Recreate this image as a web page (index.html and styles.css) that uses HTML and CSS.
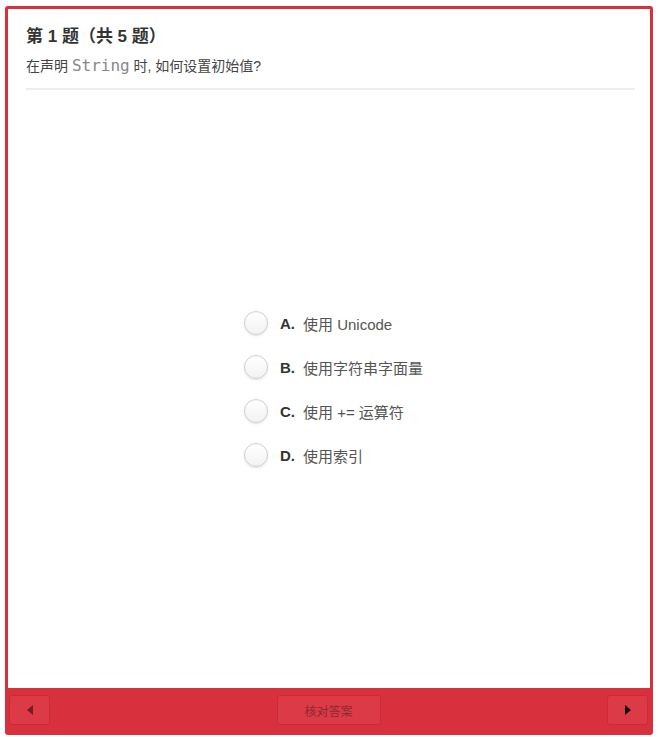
FILE: index.html
```html
<!DOCTYPE html>
<html lang="zh">
<head>
<meta charset="utf-8">
<link rel="stylesheet" href="styles.css">
</head>
<body>
<div class="quiz">
  <div class="main">
    <div class="head">
      <div class="title">第 1 题（共 5 题）</div>
      <div class="question">在声明 <code>String</code> 时, 如何设置初始值?</div>
    </div>
    <div class="options">
      <div class="list">
        <label class="opt"><span class="radio"></span><b>A.</b><span class="txt">使用 Unicode</span></label>
        <label class="opt"><span class="radio"></span><b>B.</b><span class="txt">使用字符串字面量</span></label>
        <label class="opt"><span class="radio"></span><b>C.</b><span class="txt">使用 += 运算符</span></label>
        <label class="opt"><span class="radio"></span><b>D.</b><span class="txt">使用索引</span></label>
      </div>
    </div>
  </div>
  <div class="foot">
    <button class="btn nav"><svg width="12" height="12" viewBox="0 0 12 12"><path d="M9 1 L3 6 L9 11 Z" fill="#7a1a22"/></svg></button>
    <button class="btn check">核对答案</button>
    <button class="btn nav"><svg width="12" height="12" viewBox="0 0 12 12"><path d="M3 1 L9 6 L3 11 Z" fill="#111"/></svg></button>
  </div>
</div>
</body>
</html>
```
FILE: styles.css
```css
* { box-sizing: border-box; }
html, body { margin: 0; padding: 0; background: #fff; }
body {
  font-family: "Liberation Sans", "Noto Sans CJK SC", sans-serif;
  color: #333;
  padding: 6px 5px 2px 5px;
}
.quiz {
  height: 729px;
  border: 3px solid #d9303d;
  border-radius: 3px;
  display: flex;
  flex-direction: column;
  background: #fff;
}
.main {
  flex: 1;
  display: flex;
  flex-direction: column;
  padding: 16px 15px 0 18px;
}
.head {
  border-bottom: 2px solid #eeeeee;
  padding-bottom: 11px;
}
.title {
  font-size: 17px;
  font-weight: bold;
  color: #333;
  line-height: 24px;
}
.question {
  font-size: 14px;
  color: #444;
  line-height: 22px;
  margin-top: 6px;
}
.question code {
  font-family: "DejaVu Sans Mono", monospace;
  font-size: 16px;
  color: #888;
}
.options {
  flex: 1;
  display: flex;
  justify-content: center;
  align-items: center;
  padding-left: 6px;
}
.list {
  display: flex;
  flex-direction: column;
  gap: 20px;
}
.opt {
  display: flex;
  align-items: center;
  height: 24px;
  font-size: 15px;
  color: #555;
  white-space: nowrap;
}
.radio {
  width: 24px;
  height: 24px;
  border-radius: 50%;
  border: 1px solid #cfcfcf;
  background: linear-gradient(#ffffff, #f2f2f2);
  box-shadow: 0 1px 2px rgba(0,0,0,0.12);
  margin-right: 12px;
}
.opt b {
  font-size: 15px;
  color: #333;
  margin-right: 8px;
}
.txt { font-size: 15px; }
.foot {
  height: 44px;
  background: #d9303d;
  display: flex;
  align-items: center;
  justify-content: space-between;
  padding: 0 2px 0 1px;
}
.btn {
  height: 30px;
  border: 1px solid #cc2a37;
  background: #dc3a47;
  border-radius: 3px;
  font-family: "Liberation Sans", "Noto Sans CJK SC", sans-serif;
  display: flex;
  align-items: center;
  justify-content: center;
  padding: 0;
}
.nav { width: 41px; }
.check {
  width: 104px;
  font-size: 12px;
  color: #8a2a33;
}
```
